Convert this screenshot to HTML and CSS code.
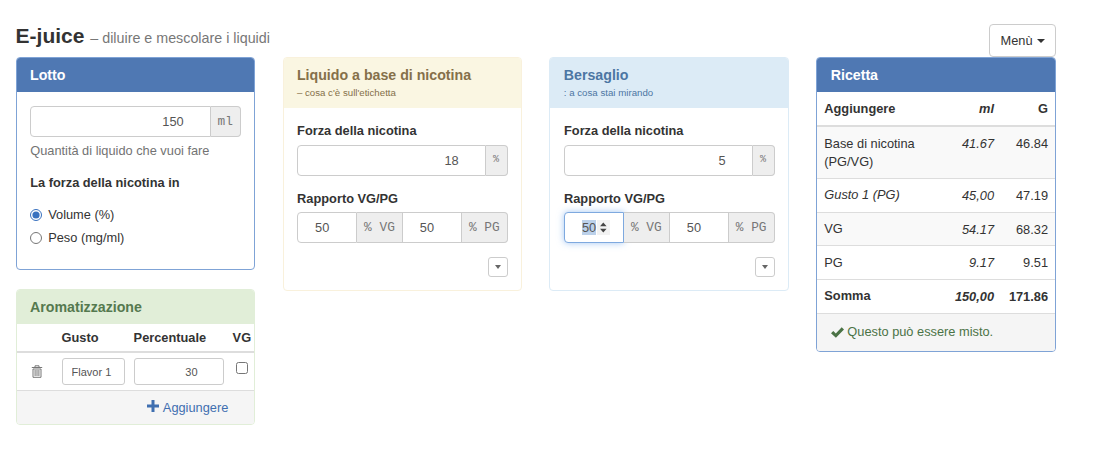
FILE: index.html
```
<!DOCTYPE html>
<html lang="it">
  <head>
    <meta charset="UTF-8" />
    <meta name="viewport" content="width=device-width, initial-scale=1.0" />
    <title>E-juice</title>
    <link rel="stylesheet" href="styles.css">
  </head>
  <body>
    <div class="container">
      <header class="page-header">
        <h1>E-juice <small>– diluire e mescolare i liquidi</small></h1>
        <button class="btn btn-menu">Menù <span class="caret"></span></button>
      </header>

      <div class="row">
        <div class="col">
          <div class="panel panel-primary">
            <div class="panel-heading"><h3>Lotto</h3></div>
            <div class="panel-body batch">
              <div class="input-group">
                <input class="form-control amount" type="text" value="150" aria-label="Quantità" />
                <span class="addon">ml</span>
              </div>
              <p class="help-block">Quantità di liquido che vuoi fare</p>
              <p class="label">La forza della nicotina in</p>
              <label class="radio"><input type="radio" name="unit" checked /><span>Volume (%)</span></label>
              <label class="radio"><input type="radio" name="unit" /><span>Peso (mg/ml)</span></label>
            </div>
          </div>

          <div class="panel panel-success">
            <div class="panel-heading"><h3>Aromatizzazione</h3></div>
            <div class="flavor-row flavor-head">
              <span></span>
              <span>Gusto</span>
              <span>Percentuale</span>
              <span>VG</span>
            </div>
            <div class="flavor-row flavor-item">
              <svg class="trash" viewBox="0 0 12 13" width="12" height="13">
                <path d="M4 2V.8h4V2M.8 2.5h10.4M2 4v8.3h8V4zM4.1 5v6M6 5v6M7.9 5v6" />
              </svg>
              <input class="form-control input-sm" type="text" value="Flavor 1" aria-label="Gusto" />
              <input class="form-control input-sm percent" type="text" value="30" aria-label="Percentuale" />
              <input class="check" type="checkbox" aria-label="VG" />
            </div>
            <div class="panel-footer add">
              <a href="#">
                <svg viewBox="0 0 12 12" width="12" height="12"><path d="M4.5 0h3v4.5H12v3H7.5V12h-3V7.5H0v-3h4.5z" /></svg>
                <span>Aggiungere</span>
              </a>
            </div>
          </div>
        </div>

        <div class="col">
          <div class="panel panel-warning">
            <div class="panel-heading">
              <h3>Liquido a base di nicotina</h3>
              <small>– cosa c'è sull'etichetta</small>
            </div>
            <div class="panel-body liquid">
              <p class="label">Forza della nicotina</p>
              <div class="input-group">
                <input class="form-control strength" type="text" value="18" aria-label="Forza" />
                <span class="addon">%</span>
              </div>
              <p class="label">Rapporto VG/PG</p>
              <div class="input-group ratio">
                <input class="form-control" type="text" value="50" aria-label="VG" />
                <span class="addon">% VG</span>
                <input class="form-control" type="text" value="50" aria-label="PG" />
                <span class="addon">% PG</span>
              </div>
              <button class="btn btn-xs" aria-label="Altro"><span class="caret"></span></button>
            </div>
          </div>
        </div>

        <div class="col">
          <div class="panel panel-info">
            <div class="panel-heading">
              <h3>Bersaglio</h3>
              <small>: a cosa stai mirando</small>
            </div>
            <div class="panel-body liquid">
              <p class="label">Forza della nicotina</p>
              <div class="input-group">
                <input class="form-control strength" type="text" value="5" aria-label="Forza" />
                <span class="addon">%</span>
              </div>
              <p class="label">Rapporto VG/PG</p>
              <div class="input-group ratio">
                <div class="form-control focused">
                  <span class="selected">50</span>
                  <svg class="spinner" viewBox="0 0 13 15" width="13" height="15"><path d="M3 6.3 6.3 2.5 9.6 6.3zM3 8.7l3.3 3.8 3.3-3.8z" /></svg>
                </div>
                <span class="addon">% VG</span>
                <input class="form-control" type="text" value="50" aria-label="PG" />
                <span class="addon">% PG</span>
              </div>
              <button class="btn btn-xs" aria-label="Altro"><span class="caret"></span></button>
            </div>
          </div>
        </div>

        <div class="col">
          <div class="panel panel-primary">
            <div class="panel-heading"><h3>Ricetta</h3></div>
            <table class="recipe">
              <thead>
                <tr><th>Aggiungere</th><th class="ml">ml</th><th class="g">G</th></tr>
              </thead>
              <tbody>
                <tr class="odd tall"><td>Base di nicotina<br />(PG/VG)</td><td class="ml">41.67</td><td class="g">46.84</td></tr>
                <tr><td><em>Gusto 1 (PG)</em></td><td class="ml">45,00</td><td class="g">47.19</td></tr>
                <tr class="odd"><td>VG</td><td class="ml">54.17</td><td class="g">68.32</td></tr>
                <tr><td>PG</td><td class="ml">9.17</td><td class="g">9.51</td></tr>
                <tr class="total"><td>Somma</td><td class="ml">150,00</td><td class="g">171.86</td></tr>
              </tbody>
            </table>
            <div class="panel-footer ok">
              <svg viewBox="0 0 13 11" width="13" height="11"><path d="M0 6.3 2.3 4l2.5 2.4L10.7.3 13 2.5 4.9 10.8z" /></svg>
              <span>Questo può essere misto.</span>
            </div>
          </div>
        </div>
      </div>
    </div>
  </body>
</html>
```
FILE: styles.css
```
* {
  box-sizing: border-box;
}

body {
  margin: 0;
  background: #fff;
  color: #333;
  font-family: 'Liberation Sans', Arial, sans-serif;
  font-size: 12.8px;
  line-height: 18px;
}

h1,
h3,
p {
  margin: 0;
}

.container {
  width: 1056px;
  padding-left: 15.6px;
}

.page-header {
  display: flex;
  justify-content: space-between;
  height: 57px;
  padding-top: 24px;
}

h1 {
  font-size: 21px;
  line-height: 24px;
}

h1 small {
  color: #777;
  font-size: 14.3px;
  font-weight: normal;
}

.row {
  display: flex;
  gap: 27.2px;
}

.col {
  flex: 1;
  min-width: 0;
}

/* buttons */
.btn {
  display: flex;
  align-items: center;
  justify-content: center;
  padding: 0;
  border: 1px solid #ccc;
  border-radius: 4px;
  background: #fff;
  color: #333;
  font: inherit;
}

.btn-menu {
  gap: 4px;
  width: 67px;
  height: 33px;
}

.btn-xs {
  width: 20px;
  height: 20px;
  margin: 13px 0 0 auto;
  border-radius: 3px;
}

.caret {
  border-top: 4px solid #333;
  border-left: 4px solid transparent;
  border-right: 4px solid transparent;
}

.btn-xs .caret {
  border-width: 4px 3.5px 0;
  border-top-color: #666;
}

/* panels */
.panel {
  margin-bottom: 19px;
  border: 1px solid;
  border-radius: 4px;
  overflow: hidden;
}

.panel-heading {
  height: 34px;
  padding: 8px 13.4px;
}

.panel-heading h3 {
  font-size: 14.2px;
  line-height: 19px;
}

.panel-primary {
  border-color: #7fa3d6;
}

.panel-primary .panel-heading {
  margin: -1px -1px 0;
  height: 35px;
  padding: 9px 14.4px;
  background: #4f78b3;
  color: #fff;
}

.panel-success {
  border-color: #e1eed8;
}

.panel-success .panel-heading {
  background: #e1eed8;
  color: #55794f;
}

.panel-warning {
  border-color: #f9f1dc;
}

.panel-warning .panel-heading {
  height: 50px;
  background: #faf6e2;
  color: #85704a;
}

.panel-info {
  border-color: #dcebf6;
}

.panel-info .panel-heading {
  height: 50px;
  background: #dcebf6;
  color: #4c76a3;
}

.panel-heading small {
  display: block;
  font-size: 9.7px;
  line-height: 16px;
}

.panel-body {
  padding: 14px 13.6px;
}

.batch {
  height: 177px;
}

.liquid {
  height: 182px;
}

.label {
  font-weight: bold;
}

/* forms */
.input-group {
  display: flex;
  height: 31px;
}

.form-control {
  flex: 1;
  min-width: 0;
  height: 100%;
  padding: 0 12px;
  border: 1px solid #ccc;
  border-radius: 4px;
  background: #fff;
  color: #555;
  font: inherit;
}

.input-group .form-control {
  border-radius: 0;
}

.input-group .form-control:first-child {
  border-radius: 4px 0 0 4px;
}

.amount,
.strength {
  padding-right: 26px;
  text-align: right;
}

.addon {
  display: flex;
  align-items: center;
  justify-content: center;
  width: 30px;
  border: 1px solid #ccc;
  border-width: 1px 0;
  background: #eee;
  color: #777;
  font-family: 'Liberation Mono', monospace;
  font-size: 12.8px;
  white-space: pre;
}

.addon:last-child {
  border-right-width: 1px;
  border-radius: 0 4px 4px 0;
}

.strength + .addon {
  width: 22px;
  font-size: 10px;
}

.help-block {
  margin-top: 5px;
  color: #737373;
}

.batch .label {
  margin: 14px 0;
}

.radio {
  display: flex;
  align-items: center;
  gap: 6px;
  height: 18px;
  margin-bottom: 5px;
}

.radio input {
  width: 12px;
  height: 12px;
  margin: 0;
  accent-color: #3871bf;
}

.liquid .input-group {
  margin: 4.5px 0 14px;
}

.ratio .form-control {
  flex: none;
  width: 60px;
  padding-left: 17px;
}

.ratio .addon {
  flex: 1;
}

.ratio .focused {
  display: flex;
  align-items: center;
  gap: 1px;
  border-color: #7ea9df;
  box-shadow: 0 0 7px rgba(102, 160, 233, 0.6);
}

.selected {
  line-height: 15px;
  background: #bcd1ea;
}

.spinner {
  background: #f2f2f2;
  fill: #444;
}

/* flavors */
.flavor-row {
  display: grid;
  grid-template-columns: 22px 63px 90px 19px;
  column-gap: 9px;
  padding-left: 14px;
}

.flavor-head {
  height: 29px;
  padding-top: 5px;
  border-bottom: 2px solid #ddd;
  font-weight: bold;
}

.flavor-item {
  align-items: center;
  height: 37px;
}

.trash {
  fill: none;
  stroke: #777;
}

.input-sm {
  height: 27px;
  padding: 0 9px;
  border-radius: 3px;
  font-size: 11px;
}

.percent {
  padding-right: 25px;
  text-align: right;
}

.check {
  width: 12px;
  height: 12px;
  margin: 0 0 7px 3px;
}

.panel-footer {
  border-top: 1px solid #ddd;
  background: #f5f5f5;
}

.add {
  height: 34px;
  padding: 8px 26px 0 0;
}

.add a {
  display: flex;
  justify-content: flex-end;
  gap: 4px;
  color: #3f6fb0;
  text-decoration: none;
}

.add svg {
  margin-top: 1px;
  fill: currentColor;
}

/* recipe */
.recipe {
  width: 100%;
  border-collapse: separate;
  border-spacing: 0;
  table-layout: fixed;
}

.recipe th,
.recipe td {
  height: 33.7px;
  padding: 0 7px;
  border-top: 1px solid #ddd;
  text-align: left;
}

.recipe th {
  height: 34px;
  border-top: 0;
  border-bottom: 1px solid #ddd;
}

.recipe .tall td {
  height: 52px;
}

.recipe .ml {
  width: 70px;
  font-style: italic;
  text-align: right;
  vertical-align: top;
  padding-top: 8px;
}

.recipe .g {
  width: 54px;
  text-align: right;
  vertical-align: top;
  padding-top: 8px;
}

.odd {
  background: #f9f9f9;
}

.total {
  font-weight: bold;
}

.ok {
  display: flex;
  align-items: center;
  gap: 3px;
  height: 38px;
  padding-left: 14px;
  color: #4b7346;
}

.ok svg {
  fill: currentColor;
}
```
